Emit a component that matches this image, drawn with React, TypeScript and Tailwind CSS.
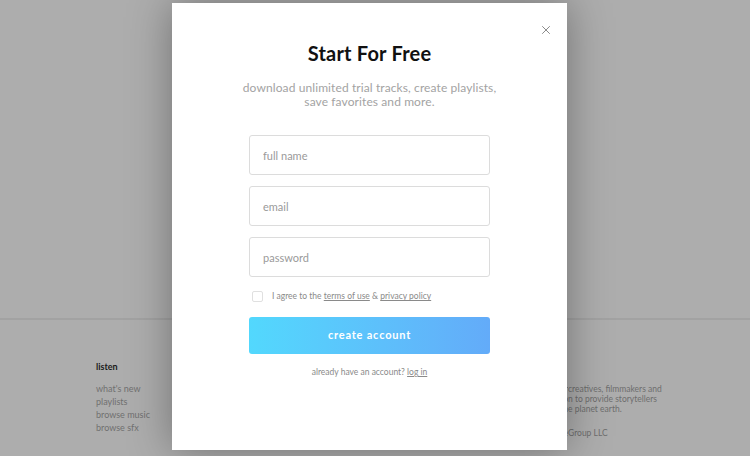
import { X } from "lucide-react";

const listenLinks = ["what's new", "playlists", "browse music", "browse sfx"];

const aboutLines: [string, string][] = [
  ["a home for ", "creatives, filmmakers and"],
  ["our missio", "n to provide storytellers"],
  ["music on th", "e planet earth."],
];

export default function App() {
  return (
    <div
      className="relative w-[750px] h-[456px] overflow-hidden bg-[#adadad]"
      style={{ fontFamily: "Lato, 'Open Sans', sans-serif" }}
    >
      {/* page behind the overlay */}
      <div className="h-[320px] border-b-2 border-[#a2a2a2]" />
      <div className="flex pl-[96px] pt-[41px]">
        <div className="w-[120px]">
          <div className="text-[9px] font-bold text-[#1b1b1b] leading-[12px]">listen</div>
          <div className="mt-[9px] flex flex-col text-[9px] leading-[13px] text-[#707070]">
            {listenLinks.map((l) => (
              <span key={l}>{l}</span>
            ))}
          </div>
        </div>
        <div className="ml-[246px] pt-[24px] text-[8.5px] leading-[9.8px] text-[#6e6e6e]">
          {aboutLines.map(([a, b]) => (
            <div key={b} className="flex">
              <span className="w-[106px] text-right whitespace-nowrap overflow-hidden">{a}</span>
              <span className="whitespace-nowrap">{b}</span>
            </div>
          ))}
          <div className="flex mt-[15px]">
            <span className="w-[106px] text-right whitespace-nowrap overflow-hidden">© 2018 Soundstripe </span>
            <span>Group LLC</span>
          </div>
        </div>
      </div>

      {/* modal */}
      <div className="absolute left-[172px] top-[3px] w-[395px] h-[447px] bg-white shadow-[0_0_40px_rgba(0,0,0,0.35)]">
        <button className="absolute right-[14px] top-[20px] text-[#666]">
          <X size={14} strokeWidth={1.3} />
        </button>
        <div className="flex flex-col items-center pt-[38px]">
          <h1 className="text-[20px] font-bold text-[#111] leading-[24px] tracking-[0.2px]">Start For Free</h1>
          <p className="mt-[16px] text-center text-[12px] leading-[14px] text-[#a3a3a3] tracking-[0.1px]">
            download unlimited trial tracks, create playlists,
            <br />
            save favorites and more.
          </p>

          <div className="mt-[26px] flex w-[241px] flex-col gap-[11px]">
            {["full name", "email", "password"].map((p) => (
              <input
                key={p}
                placeholder={p}
                type={p === "password" ? "password" : "text"}
                className="h-[40px] w-full rounded-[3px] border border-[#dcdcdc] px-[13px] text-[11px] text-[#333] outline-none placeholder:text-[#9a9a9a]"
              />
            ))}
          </div>

          <div className="mt-[13px] flex w-[241px] items-center pl-[3px]">
            <span className="h-[11px] w-[11px] rounded-[2px] border border-[#e0e0e0]" />
            <span className="ml-[9px] text-[8.5px] text-[#8a8a8a]">
              I agree to the <span className="underline">terms of use</span> &amp;{" "}
              <span className="underline">privacy policy</span>
            </span>
          </div>

          <button className="mt-[14px] h-[37px] w-[241px] rounded-[3px] bg-gradient-to-r from-[#52d8fd] to-[#63abf9] text-[11px] font-bold tracking-[0.8px] text-white">
            create account
          </button>

          <p className="mt-[12px] text-[8.5px] text-[#8a8a8a]">
            already have an account? <span className="underline">log in</span>
          </p>
        </div>
      </div>
    </div>
  );
}
